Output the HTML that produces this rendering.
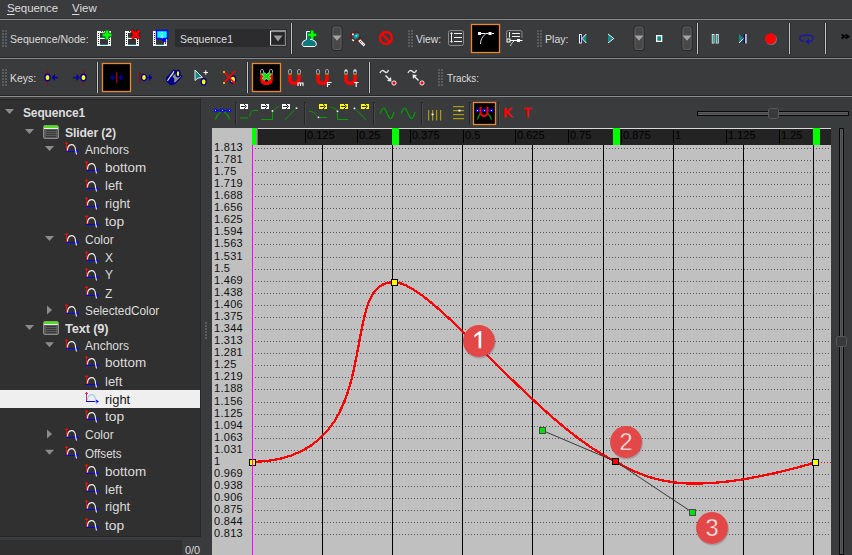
<!DOCTYPE html><html><head><meta charset="utf-8"><style>
*{margin:0;padding:0;box-sizing:border-box}
body{width:852px;height:555px;overflow:hidden;background:#3a3b3d;position:relative;font-family:"Liberation Sans",sans-serif;color:#dcdcdc;font-size:12px}
.a{position:absolute}
.t{position:absolute;white-space:nowrap;line-height:1;text-underline-offset:2px}
svg{position:absolute;left:0;top:0}
</style></head><body>

<div class="a" style="left:0px;top:18px;width:852px;height:1px;background:#333436"></div>
<div class="a" style="left:0px;top:19px;width:852px;height:1px;background:#8a8a8a"></div>
<div class="a" style="left:0px;top:20px;width:852px;height:1px;background:#353638"></div>
<div class="a" style="left:0px;top:57px;width:852px;height:1px;background:#262626"></div>
<div class="a" style="left:0px;top:58px;width:852px;height:1px;background:#8a8a8a"></div>
<div class="a" style="left:0px;top:59px;width:852px;height:1px;background:#353638"></div>
<div class="a" style="left:0px;top:95px;width:852px;height:1px;background:#262626"></div>
<div class="a" style="left:0px;top:96px;width:852px;height:1px;background:#8e8e8e"></div>
<div class="a" style="left:0px;top:97px;width:852px;height:1px;background:#38393b"></div>
<div class="t" style="left:7px;top:2.57px;font-size:11.5px;color:#dcdcdc;font-weight:normal;letter-spacing:-0.1px;"><u>S</u>equence</div>
<div class="t" style="left:72px;top:2.57px;font-size:11.5px;color:#dcdcdc;font-weight:normal;letter-spacing:0px;"><u>V</u>iew</div>
<div class="t" style="left:10px;top:34.27px;font-size:11.5px;color:#dcdcdc;font-weight:normal;letter-spacing:0px;transform:scaleX(0.917);transform-origin:0 0;">Sequence/Node:</div>
<div class="t" style="left:416px;top:34.27px;font-size:11.5px;color:#dcdcdc;font-weight:normal;letter-spacing:0px;transform:scaleX(0.896);transform-origin:0 0;">View:</div>
<div class="t" style="left:544.5px;top:34.27px;font-size:11.5px;color:#dcdcdc;font-weight:normal;letter-spacing:0px;transform:scaleX(0.918);transform-origin:0 0;">Play:</div>
<div class="t" style="left:9.9px;top:73.27px;font-size:11.5px;color:#dcdcdc;font-weight:normal;letter-spacing:0px;transform:scaleX(0.908);transform-origin:0 0;">Keys:</div>
<div class="t" style="left:446.5px;top:73.27px;font-size:11.5px;color:#dcdcdc;font-weight:normal;letter-spacing:0px;transform:scaleX(0.858);transform-origin:0 0;">Tracks:</div>
<div class="a" style="left:175px;top:29px;width:112px;height:18px;background:#2c2c2e"></div>
<div class="t" style="left:179.5px;top:34.27px;font-size:11.5px;color:#dcdcdc;font-weight:normal;letter-spacing:0px;transform:scaleX(0.91);transform-origin:0 0;">Sequence1</div>
<div class="a" style="left:0px;top:99px;width:201px;height:438px;background:#262626"></div>
<div class="a" style="left:0px;top:100px;width:200px;height:436px;background:#303030"></div>
<div class="a" style="left:0px;top:537px;width:212px;height:18px;background:#3a3b3d"></div>
<div class="a" style="left:0px;top:540px;width:182px;height:15px;background:#303031"></div>
<div class="t" style="left:185px;top:545.27px;font-size:11.5px;color:#dcdcdc;font-weight:normal;letter-spacing:0px;transform:scaleX(0.95);transform-origin:0 0;">0/0</div>
<div class="t" style="left:23px;top:106.64px;font-size:12px;color:#dcdcdc;font-weight:bold;letter-spacing:-0.15px;">Sequence1</div>
<div class="t" style="left:65px;top:126.64px;font-size:12px;color:#dcdcdc;font-weight:bold;letter-spacing:-0.15px;transform:scaleX(1.02);transform-origin:0 0;">Slider (2)</div>
<div class="t" style="left:85px;top:143.64px;font-size:12px;color:#dcdcdc;font-weight:normal;letter-spacing:0px;">Anchors</div>
<div class="t" style="left:105px;top:161.74px;font-size:12px;color:#dcdcdc;font-weight:normal;letter-spacing:0px;transform:scaleX(1.12);transform-origin:0 0;">bottom</div>
<div class="t" style="left:105px;top:179.74px;font-size:12px;color:#dcdcdc;font-weight:normal;letter-spacing:0px;transform:scaleX(1.08);transform-origin:0 0;">left</div>
<div class="t" style="left:105px;top:197.94px;font-size:12px;color:#dcdcdc;font-weight:normal;letter-spacing:0px;transform:scaleX(1.08);transform-origin:0 0;">right</div>
<div class="t" style="left:105px;top:215.74px;font-size:12px;color:#dcdcdc;font-weight:normal;letter-spacing:0px;transform:scaleX(1.15);transform-origin:0 0;">top</div>
<div class="t" style="left:85px;top:233.74px;font-size:12px;color:#dcdcdc;font-weight:normal;letter-spacing:0px;">Color</div>
<div class="t" style="left:105px;top:251.74px;font-size:12px;color:#dcdcdc;font-weight:normal;letter-spacing:0px;">X</div>
<div class="t" style="left:105px;top:269.44px;font-size:12px;color:#dcdcdc;font-weight:normal;letter-spacing:0px;">Y</div>
<div class="t" style="left:105px;top:287.64px;font-size:12px;color:#dcdcdc;font-weight:normal;letter-spacing:0px;">Z</div>
<div class="t" style="left:85px;top:305.14px;font-size:12px;color:#dcdcdc;font-weight:normal;letter-spacing:0px;transform:scaleX(0.985);transform-origin:0 0;">SelectedColor</div>
<div class="t" style="left:65px;top:322.64px;font-size:12px;color:#dcdcdc;font-weight:bold;letter-spacing:-0.15px;transform:scaleX(1.07);transform-origin:0 0;">Text (9)</div>
<div class="t" style="left:85px;top:339.94px;font-size:12px;color:#dcdcdc;font-weight:normal;letter-spacing:0px;">Anchors</div>
<div class="t" style="left:105px;top:357.14px;font-size:12px;color:#dcdcdc;font-weight:normal;letter-spacing:0px;transform:scaleX(1.12);transform-origin:0 0;">bottom</div>
<div class="t" style="left:105px;top:375.74px;font-size:12px;color:#dcdcdc;font-weight:normal;letter-spacing:0px;transform:scaleX(1.08);transform-origin:0 0;">left</div>
<div class="a" style="left:0px;top:390px;width:200px;height:18px;background:#efefef"></div>
<div class="t" style="left:105px;top:393.64px;font-size:12px;color:#141414;font-weight:normal;letter-spacing:0px;transform:scaleX(1.08);transform-origin:0 0;">right</div>
<div class="t" style="left:105px;top:411.04px;font-size:12px;color:#dcdcdc;font-weight:normal;letter-spacing:0px;transform:scaleX(1.15);transform-origin:0 0;">top</div>
<div class="t" style="left:85px;top:429.24px;font-size:12px;color:#dcdcdc;font-weight:normal;letter-spacing:0px;">Color</div>
<div class="t" style="left:85px;top:447.54px;font-size:12px;color:#dcdcdc;font-weight:normal;letter-spacing:0px;transform:scaleX(0.97);transform-origin:0 0;">Offsets</div>
<div class="t" style="left:105px;top:465.54px;font-size:12px;color:#dcdcdc;font-weight:normal;letter-spacing:0px;transform:scaleX(1.12);transform-origin:0 0;">bottom</div>
<div class="t" style="left:105px;top:483.64px;font-size:12px;color:#dcdcdc;font-weight:normal;letter-spacing:0px;transform:scaleX(1.08);transform-origin:0 0;">left</div>
<div class="t" style="left:105px;top:501.24px;font-size:12px;color:#dcdcdc;font-weight:normal;letter-spacing:0px;transform:scaleX(1.08);transform-origin:0 0;">right</div>
<div class="t" style="left:105px;top:519.64px;font-size:12px;color:#dcdcdc;font-weight:normal;letter-spacing:0px;transform:scaleX(1.15);transform-origin:0 0;">top</div>
<svg width="852" height="555"><path d="M5 108.89999999999999H14L9.5 113.89999999999999Z" fill="#8c8c8c"/><path d="M25 128.9H34L29.5 133.9Z" fill="#8c8c8c"/><rect x="43.5" y="125.5" width="15" height="13" rx="1.5" fill="#5a5a5a" stroke="#8a8a8a" stroke-width="1"/><path d="M44 128.5V126.5Q44 125.5 45 125.5H57L58 126.5V128.5Z" fill="#55dd22"/><rect x="44" y="128" width="14" height="1" fill="#e8f0e8"/><rect x="46" y="130" width="10" height="1" fill="#3a3a3a"/><rect x="46" y="132" width="10" height="1" fill="#3a3a3a"/><rect x="46" y="134" width="10" height="1" fill="#3a3a3a"/><rect x="46" y="136" width="10" height="1" fill="#3a3a3a"/><path d="M45 145.9H54L49.5 150.9Z" fill="#8c8c8c"/><rect x="66" y="142" width="1" height="9" fill="#ff0000"/><rect x="65" y="143" width="3" height="1" fill="#ff0000"/><rect x="66" y="151" width="11" height="1" fill="#0000ff"/><path d="M76 149.5L79 151.5L76 153.5Z" fill="#0000ff"/><path d="M67.5 150.5C67.5 143 75.5 142.5 75.5 150L76.5 154.5" stroke="#f4f4f4" stroke-width="1.1" fill="none"/><rect x="86" y="161" width="1" height="9" fill="#ff0000"/><rect x="85" y="162" width="3" height="1" fill="#ff0000"/><rect x="86" y="170" width="11" height="1" fill="#0000ff"/><path d="M96 168.5L99 170.5L96 172.5Z" fill="#0000ff"/><path d="M87.5 169.5C87.5 162 95.5 161.5 95.5 169L96.5 173.5" stroke="#f4f4f4" stroke-width="1.1" fill="none"/><rect x="86" y="179" width="1" height="9" fill="#ff0000"/><rect x="85" y="180" width="3" height="1" fill="#ff0000"/><rect x="86" y="188" width="11" height="1" fill="#0000ff"/><path d="M96 186.5L99 188.5L96 190.5Z" fill="#0000ff"/><path d="M87.5 187.5C87.5 180 95.5 179.5 95.5 187L96.5 191.5" stroke="#f4f4f4" stroke-width="1.1" fill="none"/><rect x="86" y="197" width="1" height="9" fill="#ff0000"/><rect x="85" y="198" width="3" height="1" fill="#ff0000"/><rect x="86" y="206" width="11" height="1" fill="#0000ff"/><path d="M96 204.5L99 206.5L96 208.5Z" fill="#0000ff"/><path d="M87.5 205.5C87.5 198 95.5 197.5 95.5 205L96.5 209.5" stroke="#f4f4f4" stroke-width="1.1" fill="none"/><rect x="86" y="215" width="1" height="9" fill="#ff0000"/><rect x="85" y="216" width="3" height="1" fill="#ff0000"/><rect x="86" y="224" width="11" height="1" fill="#0000ff"/><path d="M96 222.5L99 224.5L96 226.5Z" fill="#0000ff"/><path d="M87.5 223.5C87.5 216 95.5 215.5 95.5 223L96.5 227.5" stroke="#f4f4f4" stroke-width="1.1" fill="none"/><path d="M45 236.0H54L49.5 241.0Z" fill="#8c8c8c"/><rect x="66" y="233" width="1" height="9" fill="#ff0000"/><rect x="65" y="234" width="3" height="1" fill="#ff0000"/><rect x="66" y="242" width="11" height="1" fill="#0000ff"/><path d="M76 240.5L79 242.5L76 244.5Z" fill="#0000ff"/><path d="M67.5 241.5C67.5 234 75.5 233.5 75.5 241L76.5 245.5" stroke="#f4f4f4" stroke-width="1.1" fill="none"/><rect x="86" y="251" width="1" height="9" fill="#ff0000"/><rect x="85" y="252" width="3" height="1" fill="#ff0000"/><rect x="86" y="260" width="11" height="1" fill="#0000ff"/><path d="M96 258.5L99 260.5L96 262.5Z" fill="#0000ff"/><path d="M87.5 259.5C87.5 252 95.5 251.5 95.5 259L96.5 263.5" stroke="#f4f4f4" stroke-width="1.1" fill="none"/><rect x="86" y="268" width="1" height="9" fill="#ff0000"/><rect x="85" y="269" width="3" height="1" fill="#ff0000"/><rect x="86" y="277" width="11" height="1" fill="#0000ff"/><path d="M96 275.5L99 277.5L96 279.5Z" fill="#0000ff"/><path d="M87.5 276.5C87.5 269 95.5 268.5 95.5 276L96.5 280.5" stroke="#f4f4f4" stroke-width="1.1" fill="none"/><rect x="86" y="286" width="1" height="9" fill="#ff0000"/><rect x="85" y="287" width="3" height="1" fill="#ff0000"/><rect x="86" y="295" width="11" height="1" fill="#0000ff"/><path d="M96 293.5L99 295.5L96 297.5Z" fill="#0000ff"/><path d="M87.5 294.5C87.5 287 95.5 286.5 95.5 294L96.5 298.5" stroke="#f4f4f4" stroke-width="1.1" fill="none"/><path d="M47 305.40000000000003V314.40000000000003L52 309.90000000000003Z" fill="#8c8c8c"/><rect x="66" y="304" width="1" height="9" fill="#ff0000"/><rect x="65" y="305" width="3" height="1" fill="#ff0000"/><rect x="66" y="313" width="11" height="1" fill="#0000ff"/><path d="M76 311.5L79 313.5L76 315.5Z" fill="#0000ff"/><path d="M67.5 312.5C67.5 305 75.5 304.5 75.5 312L76.5 316.5" stroke="#f4f4f4" stroke-width="1.1" fill="none"/><path d="M25 324.90000000000003H34L29.5 329.90000000000003Z" fill="#8c8c8c"/><rect x="43.5" y="321.5" width="15" height="13" rx="1.5" fill="#5a5a5a" stroke="#8a8a8a" stroke-width="1"/><path d="M44 324.5V322.5Q44 321.5 45 321.5H57L58 322.5V324.5Z" fill="#55dd22"/><rect x="44" y="324" width="14" height="1" fill="#e8f0e8"/><rect x="46" y="326" width="10" height="1" fill="#3a3a3a"/><rect x="46" y="328" width="10" height="1" fill="#3a3a3a"/><rect x="46" y="330" width="10" height="1" fill="#3a3a3a"/><rect x="46" y="332" width="10" height="1" fill="#3a3a3a"/><path d="M45 342.20000000000005H54L49.5 347.20000000000005Z" fill="#8c8c8c"/><rect x="66" y="339" width="1" height="9" fill="#ff0000"/><rect x="65" y="340" width="3" height="1" fill="#ff0000"/><rect x="66" y="348" width="11" height="1" fill="#0000ff"/><path d="M76 346.5L79 348.5L76 350.5Z" fill="#0000ff"/><path d="M67.5 347.5C67.5 340 75.5 339.5 75.5 347L76.5 351.5" stroke="#f4f4f4" stroke-width="1.1" fill="none"/><rect x="86" y="356" width="1" height="9" fill="#ff0000"/><rect x="85" y="357" width="3" height="1" fill="#ff0000"/><rect x="86" y="365" width="11" height="1" fill="#0000ff"/><path d="M96 363.5L99 365.5L96 367.5Z" fill="#0000ff"/><path d="M87.5 364.5C87.5 357 95.5 356.5 95.5 364L96.5 368.5" stroke="#f4f4f4" stroke-width="1.1" fill="none"/><rect x="86" y="375" width="1" height="9" fill="#ff0000"/><rect x="85" y="376" width="3" height="1" fill="#ff0000"/><rect x="86" y="384" width="11" height="1" fill="#0000ff"/><path d="M96 382.5L99 384.5L96 386.5Z" fill="#0000ff"/><path d="M87.5 383.5C87.5 376 95.5 375.5 95.5 383L96.5 387.5" stroke="#f4f4f4" stroke-width="1.1" fill="none"/><rect x="86" y="392" width="1" height="9" fill="#c03070"/><rect x="85" y="393" width="3" height="1" fill="#c03070"/><rect x="86" y="401" width="11" height="1" fill="#0000ff"/><path d="M96 399.5L99 401.5L96 403.5Z" fill="#0000ff"/><path d="M87.5 400.5C87.5 393 95.5 392.5 95.5 400L96.5 404.5" stroke="#a8c8ea" stroke-width="1.1" fill="none"/><rect x="86" y="410" width="1" height="9" fill="#ff0000"/><rect x="85" y="411" width="3" height="1" fill="#ff0000"/><rect x="86" y="419" width="11" height="1" fill="#0000ff"/><path d="M96 417.5L99 419.5L96 421.5Z" fill="#0000ff"/><path d="M87.5 418.5C87.5 411 95.5 410.5 95.5 418L96.5 422.5" stroke="#f4f4f4" stroke-width="1.1" fill="none"/><path d="M47 429.5V438.5L52 434.0Z" fill="#8c8c8c"/><rect x="66" y="428" width="1" height="9" fill="#ff0000"/><rect x="65" y="429" width="3" height="1" fill="#ff0000"/><rect x="66" y="437" width="11" height="1" fill="#0000ff"/><path d="M76 435.5L79 437.5L76 439.5Z" fill="#0000ff"/><path d="M67.5 436.5C67.5 429 75.5 428.5 75.5 436L76.5 440.5" stroke="#f4f4f4" stroke-width="1.1" fill="none"/><path d="M45 449.8H54L49.5 454.8Z" fill="#8c8c8c"/><rect x="66" y="446" width="1" height="9" fill="#ff0000"/><rect x="65" y="447" width="3" height="1" fill="#ff0000"/><rect x="66" y="455" width="11" height="1" fill="#0000ff"/><path d="M76 453.5L79 455.5L76 457.5Z" fill="#0000ff"/><path d="M67.5 454.5C67.5 447 75.5 446.5 75.5 454L76.5 458.5" stroke="#f4f4f4" stroke-width="1.1" fill="none"/><rect x="86" y="464" width="1" height="9" fill="#ff0000"/><rect x="85" y="465" width="3" height="1" fill="#ff0000"/><rect x="86" y="473" width="11" height="1" fill="#0000ff"/><path d="M96 471.5L99 473.5L96 475.5Z" fill="#0000ff"/><path d="M87.5 472.5C87.5 465 95.5 464.5 95.5 472L96.5 476.5" stroke="#f4f4f4" stroke-width="1.1" fill="none"/><rect x="86" y="482" width="1" height="9" fill="#ff0000"/><rect x="85" y="483" width="3" height="1" fill="#ff0000"/><rect x="86" y="491" width="11" height="1" fill="#0000ff"/><path d="M96 489.5L99 491.5L96 493.5Z" fill="#0000ff"/><path d="M87.5 490.5C87.5 483 95.5 482.5 95.5 490L96.5 494.5" stroke="#f4f4f4" stroke-width="1.1" fill="none"/><rect x="86" y="500" width="1" height="9" fill="#ff0000"/><rect x="85" y="501" width="3" height="1" fill="#ff0000"/><rect x="86" y="509" width="11" height="1" fill="#0000ff"/><path d="M96 507.5L99 509.5L96 511.5Z" fill="#0000ff"/><path d="M87.5 508.5C87.5 501 95.5 500.5 95.5 508L96.5 512.5" stroke="#f4f4f4" stroke-width="1.1" fill="none"/><rect x="86" y="518" width="1" height="9" fill="#ff0000"/><rect x="85" y="519" width="3" height="1" fill="#ff0000"/><rect x="86" y="527" width="11" height="1" fill="#0000ff"/><path d="M96 525.5L99 527.5L96 529.5Z" fill="#0000ff"/><path d="M87.5 526.5C87.5 519 95.5 518.5 95.5 526L96.5 530.5" stroke="#f4f4f4" stroke-width="1.1" fill="none"/></svg>
<div class="a" style="left:201px;top:98px;width:11px;height:457px;background:#3a3b3d"></div>
<div class="a" style="left:212px;top:128px;width:619px;height:427px;background:#c0c0c0"></div>
<div class="a" style="left:831px;top:98px;width:21px;height:457px;background:#3a3b3d"></div>
<div class="a" style="left:257px;top:128px;width:574px;height:17px;background:#232323"></div>
<div class="a" style="left:258px;top:128px;width:573px;height:1px;background:#d8d8d8"></div>
<svg width="852" height="555"><line x1="255" y1="148.5" x2="831" y2="148.5" stroke="#5a5a5a" stroke-width="1" stroke-dasharray="1 2"/><line x1="255" y1="160.5" x2="831" y2="160.5" stroke="#5a5a5a" stroke-width="1" stroke-dasharray="1 2"/><line x1="255" y1="172.5" x2="831" y2="172.5" stroke="#5a5a5a" stroke-width="1" stroke-dasharray="1 2"/><line x1="255" y1="184.5" x2="831" y2="184.5" stroke="#5a5a5a" stroke-width="1" stroke-dasharray="1 2"/><line x1="255" y1="196.5" x2="831" y2="196.5" stroke="#5a5a5a" stroke-width="1" stroke-dasharray="1 2"/><line x1="255" y1="208.5" x2="831" y2="208.5" stroke="#5a5a5a" stroke-width="1" stroke-dasharray="1 2"/><line x1="255" y1="220.5" x2="831" y2="220.5" stroke="#5a5a5a" stroke-width="1" stroke-dasharray="1 2"/><line x1="255" y1="232.5" x2="831" y2="232.5" stroke="#5a5a5a" stroke-width="1" stroke-dasharray="1 2"/><line x1="255" y1="244.5" x2="831" y2="244.5" stroke="#5a5a5a" stroke-width="1" stroke-dasharray="1 2"/><line x1="255" y1="257.5" x2="831" y2="257.5" stroke="#5a5a5a" stroke-width="1" stroke-dasharray="1 2"/><line x1="255" y1="269.5" x2="831" y2="269.5" stroke="#5a5a5a" stroke-width="1" stroke-dasharray="1 2"/><line x1="255" y1="281.5" x2="831" y2="281.5" stroke="#5a5a5a" stroke-width="1" stroke-dasharray="1 2"/><line x1="255" y1="293.5" x2="831" y2="293.5" stroke="#5a5a5a" stroke-width="1" stroke-dasharray="1 2"/><line x1="255" y1="305.5" x2="831" y2="305.5" stroke="#5a5a5a" stroke-width="1" stroke-dasharray="1 2"/><line x1="255" y1="317.5" x2="831" y2="317.5" stroke="#5a5a5a" stroke-width="1" stroke-dasharray="1 2"/><line x1="255" y1="329.5" x2="831" y2="329.5" stroke="#5a5a5a" stroke-width="1" stroke-dasharray="1 2"/><line x1="255" y1="341.5" x2="831" y2="341.5" stroke="#5a5a5a" stroke-width="1" stroke-dasharray="1 2"/><line x1="255" y1="353.5" x2="831" y2="353.5" stroke="#5a5a5a" stroke-width="1" stroke-dasharray="1 2"/><line x1="255" y1="365.5" x2="831" y2="365.5" stroke="#5a5a5a" stroke-width="1" stroke-dasharray="1 2"/><line x1="255" y1="377.5" x2="831" y2="377.5" stroke="#5a5a5a" stroke-width="1" stroke-dasharray="1 2"/><line x1="255" y1="389.5" x2="831" y2="389.5" stroke="#5a5a5a" stroke-width="1" stroke-dasharray="1 2"/><line x1="255" y1="402.5" x2="831" y2="402.5" stroke="#5a5a5a" stroke-width="1" stroke-dasharray="1 2"/><line x1="255" y1="414.5" x2="831" y2="414.5" stroke="#5a5a5a" stroke-width="1" stroke-dasharray="1 2"/><line x1="255" y1="426.5" x2="831" y2="426.5" stroke="#5a5a5a" stroke-width="1" stroke-dasharray="1 2"/><line x1="255" y1="438.5" x2="831" y2="438.5" stroke="#5a5a5a" stroke-width="1" stroke-dasharray="1 2"/><line x1="255" y1="450.5" x2="831" y2="450.5" stroke="#5a5a5a" stroke-width="1" stroke-dasharray="1 2"/><line x1="255" y1="462.5" x2="831" y2="462.5" stroke="#5a5a5a" stroke-width="1" stroke-dasharray="1 2"/><line x1="255" y1="474.5" x2="831" y2="474.5" stroke="#5a5a5a" stroke-width="1" stroke-dasharray="1 2"/><line x1="255" y1="486.5" x2="831" y2="486.5" stroke="#5a5a5a" stroke-width="1" stroke-dasharray="1 2"/><line x1="255" y1="498.5" x2="831" y2="498.5" stroke="#5a5a5a" stroke-width="1" stroke-dasharray="1 2"/><line x1="255" y1="510.5" x2="831" y2="510.5" stroke="#5a5a5a" stroke-width="1" stroke-dasharray="1 2"/><line x1="255" y1="522.5" x2="831" y2="522.5" stroke="#5a5a5a" stroke-width="1" stroke-dasharray="1 2"/><line x1="255" y1="534.5" x2="831" y2="534.5" stroke="#5a5a5a" stroke-width="1" stroke-dasharray="1 2"/><rect x="322" y="145" width="1" height="410" fill="#000"/><rect x="392" y="145" width="1" height="410" fill="#000"/><rect x="462" y="145" width="1" height="410" fill="#000"/><rect x="532" y="145" width="1" height="410" fill="#000"/><rect x="603" y="145" width="1" height="410" fill="#000"/><rect x="673" y="145" width="1" height="410" fill="#000"/><rect x="743" y="145" width="1" height="410" fill="#000"/><rect x="813" y="145" width="1" height="410" fill="#000"/></svg>
<div class="t" style="left:214px;top:142.19px;font-size:11px;color:#101010;font-weight:normal;letter-spacing:0.3px;">1.813</div>
<div class="t" style="left:214px;top:154.19px;font-size:11px;color:#101010;font-weight:normal;letter-spacing:0.3px;">1.781</div>
<div class="t" style="left:214px;top:166.19px;font-size:11px;color:#101010;font-weight:normal;letter-spacing:0.3px;">1.75</div>
<div class="t" style="left:214px;top:178.19px;font-size:11px;color:#101010;font-weight:normal;letter-spacing:0.3px;">1.719</div>
<div class="t" style="left:214px;top:190.19px;font-size:11px;color:#101010;font-weight:normal;letter-spacing:0.3px;">1.688</div>
<div class="t" style="left:214px;top:202.19px;font-size:11px;color:#101010;font-weight:normal;letter-spacing:0.3px;">1.656</div>
<div class="t" style="left:214px;top:214.19px;font-size:11px;color:#101010;font-weight:normal;letter-spacing:0.3px;">1.625</div>
<div class="t" style="left:214px;top:226.19px;font-size:11px;color:#101010;font-weight:normal;letter-spacing:0.3px;">1.594</div>
<div class="t" style="left:214px;top:238.19px;font-size:11px;color:#101010;font-weight:normal;letter-spacing:0.3px;">1.563</div>
<div class="t" style="left:214px;top:251.19px;font-size:11px;color:#101010;font-weight:normal;letter-spacing:0.3px;">1.531</div>
<div class="t" style="left:214px;top:263.19px;font-size:11px;color:#101010;font-weight:normal;letter-spacing:0.3px;">1.5</div>
<div class="t" style="left:214px;top:275.19px;font-size:11px;color:#101010;font-weight:normal;letter-spacing:0.3px;">1.469</div>
<div class="t" style="left:214px;top:287.19px;font-size:11px;color:#101010;font-weight:normal;letter-spacing:0.3px;">1.438</div>
<div class="t" style="left:214px;top:299.19px;font-size:11px;color:#101010;font-weight:normal;letter-spacing:0.3px;">1.406</div>
<div class="t" style="left:214px;top:311.19px;font-size:11px;color:#101010;font-weight:normal;letter-spacing:0.3px;">1.375</div>
<div class="t" style="left:214px;top:323.19px;font-size:11px;color:#101010;font-weight:normal;letter-spacing:0.3px;">1.344</div>
<div class="t" style="left:214px;top:335.19px;font-size:11px;color:#101010;font-weight:normal;letter-spacing:0.3px;">1.313</div>
<div class="t" style="left:214px;top:347.19px;font-size:11px;color:#101010;font-weight:normal;letter-spacing:0.3px;">1.281</div>
<div class="t" style="left:214px;top:359.19px;font-size:11px;color:#101010;font-weight:normal;letter-spacing:0.3px;">1.25</div>
<div class="t" style="left:214px;top:371.19px;font-size:11px;color:#101010;font-weight:normal;letter-spacing:0.3px;">1.219</div>
<div class="t" style="left:214px;top:383.19px;font-size:11px;color:#101010;font-weight:normal;letter-spacing:0.3px;">1.188</div>
<div class="t" style="left:214px;top:396.19px;font-size:11px;color:#101010;font-weight:normal;letter-spacing:0.3px;">1.156</div>
<div class="t" style="left:214px;top:408.19px;font-size:11px;color:#101010;font-weight:normal;letter-spacing:0.3px;">1.125</div>
<div class="t" style="left:214px;top:420.19px;font-size:11px;color:#101010;font-weight:normal;letter-spacing:0.3px;">1.094</div>
<div class="t" style="left:214px;top:432.19px;font-size:11px;color:#101010;font-weight:normal;letter-spacing:0.3px;">1.063</div>
<div class="t" style="left:214px;top:444.19px;font-size:11px;color:#101010;font-weight:normal;letter-spacing:0.3px;">1.031</div>
<div class="t" style="left:214px;top:456.19px;font-size:11px;color:#101010;font-weight:normal;letter-spacing:0.3px;">1</div>
<div class="t" style="left:214px;top:468.19px;font-size:11px;color:#101010;font-weight:normal;letter-spacing:0.3px;">0.969</div>
<div class="t" style="left:214px;top:480.19px;font-size:11px;color:#101010;font-weight:normal;letter-spacing:0.3px;">0.938</div>
<div class="t" style="left:214px;top:492.19px;font-size:11px;color:#101010;font-weight:normal;letter-spacing:0.3px;">0.906</div>
<div class="t" style="left:214px;top:504.19px;font-size:11px;color:#101010;font-weight:normal;letter-spacing:0.3px;">0.875</div>
<div class="t" style="left:214px;top:516.19px;font-size:11px;color:#101010;font-weight:normal;letter-spacing:0.3px;">0.844</div>
<div class="t" style="left:214px;top:528.19px;font-size:11px;color:#101010;font-weight:normal;letter-spacing:0.3px;">0.813</div>
<div class="a" style="left:305px;top:130px;width:1px;height:13px;background:#000"></div>
<div class="t" style="left:307px;top:130.19px;font-size:11px;color:#000000;font-weight:normal;letter-spacing:0px;">0.125</div>
<div class="a" style="left:357px;top:130px;width:1px;height:13px;background:#000"></div>
<div class="t" style="left:359px;top:130.19px;font-size:11px;color:#000000;font-weight:normal;letter-spacing:0px;">0.25</div>
<div class="a" style="left:410px;top:130px;width:1px;height:13px;background:#000"></div>
<div class="t" style="left:412px;top:130.19px;font-size:11px;color:#000000;font-weight:normal;letter-spacing:0px;">0.375</div>
<div class="a" style="left:463px;top:130px;width:1px;height:13px;background:#000"></div>
<div class="t" style="left:465px;top:130.19px;font-size:11px;color:#000000;font-weight:normal;letter-spacing:0px;">0.5</div>
<div class="a" style="left:515px;top:130px;width:1px;height:13px;background:#000"></div>
<div class="t" style="left:517px;top:130.19px;font-size:11px;color:#000000;font-weight:normal;letter-spacing:0px;">0.625</div>
<div class="a" style="left:568px;top:130px;width:1px;height:13px;background:#000"></div>
<div class="t" style="left:570px;top:130.19px;font-size:11px;color:#000000;font-weight:normal;letter-spacing:0px;">0.75</div>
<div class="a" style="left:621px;top:130px;width:1px;height:13px;background:#000"></div>
<div class="t" style="left:623px;top:130.19px;font-size:11px;color:#000000;font-weight:normal;letter-spacing:0px;">0.875</div>
<div class="a" style="left:673px;top:130px;width:1px;height:13px;background:#000"></div>
<div class="t" style="left:675px;top:130.19px;font-size:11px;color:#000000;font-weight:normal;letter-spacing:0px;">1</div>
<div class="a" style="left:726px;top:130px;width:1px;height:13px;background:#000"></div>
<div class="t" style="left:728px;top:130.19px;font-size:11px;color:#000000;font-weight:normal;letter-spacing:0px;">1.125</div>
<div class="a" style="left:779px;top:130px;width:1px;height:13px;background:#000"></div>
<div class="t" style="left:781px;top:130.19px;font-size:11px;color:#000000;font-weight:normal;letter-spacing:0px;">1.25</div>
<div class="a" style="left:252px;top:128px;width:5px;height:17px;background:#00ff00"></div>
<div class="a" style="left:392px;top:128px;width:7px;height:17px;background:#00ff00"></div>
<div class="a" style="left:613px;top:128px;width:7px;height:17px;background:#00ff00"></div>
<div class="a" style="left:813px;top:128px;width:7px;height:17px;background:#00ff00"></div>
<div class="a" style="left:257px;top:128px;width:1px;height:17px;background:#ff00ff"></div>
<div class="a" style="left:252px;top:145px;width:1px;height:410px;background:#ff00ff"></div>
<svg width="852" height="555"><path d="M252.5 462 C394.8 459.3 333 279.2 394.5 282.3 C433.2 282.5 538.1 425.9 615.5 461.3 C652.7 483.8 695.8 497.1 815.5 462.5" fill="none" stroke="#ff0000" stroke-width="2.3" shape-rendering="crispEdges"/><rect x="819" y="462" width="12" height="1" fill="#c0c0c0"/><rect x="821" y="462" width="1" height="1" fill="#ff0000"/><rect x="824" y="462" width="1" height="1" fill="#ff0000"/><rect x="827" y="462" width="1" height="1" fill="#ff0000"/><rect x="830" y="462" width="1" height="1" fill="#ff0000"/><line x1="542.5" y1="430.5" x2="615.5" y2="461.5" stroke="#3a3a3a" stroke-width="1"/><line x1="615.5" y1="461.5" x2="692.5" y2="512.5" stroke="#3a3a3a" stroke-width="1"/><rect x="249.5" y="459.5" width="6" height="6" fill="#ffff00" stroke="#000" stroke-width="1"/><rect x="391.5" y="279.5" width="6" height="6" fill="#ffff00" stroke="#000" stroke-width="1"/><rect x="612.5" y="458.5" width="6" height="6" fill="#ff0000" stroke="#000" stroke-width="1"/><rect x="812.5" y="459.5" width="6" height="6" fill="#ffff00" stroke="#000" stroke-width="1"/><rect x="539.5" y="427.5" width="6" height="6" fill="#00e000" stroke="#4a4a4a" stroke-width="1"/><rect x="689.5" y="509.5" width="6" height="6" fill="#00e000" stroke="#4a4a4a" stroke-width="1"/><circle cx="479.59999999999997" cy="342.2" r="16.2" fill="rgba(0,0,0,0.16)"/><circle cx="478.9" cy="341" r="15.9" fill="#e34848"/><path d="M478.6 348.2V334.6L474.3 337.6V335.1L479.6 330.9H481.2V348.2Z" fill="#fff"/><circle cx="626.7" cy="443.2" r="16.2" fill="rgba(0,0,0,0.16)"/><circle cx="626" cy="442" r="15.9" fill="#e34848"/><text x="626" y="450.2" text-anchor="middle" font-family="Liberation Sans" font-size="23.5" fill="#fff" stroke="#e34848" stroke-width="0.5">2</text><circle cx="712.7" cy="529.2" r="16.2" fill="rgba(0,0,0,0.16)"/><circle cx="712" cy="528" r="15.9" fill="#e34848"/><text x="712" y="536.2" text-anchor="middle" font-family="Liberation Sans" font-size="23.5" fill="#fff" stroke="#e34848" stroke-width="0.5">3</text><rect x="252" y="455" width="1" height="15" fill="#ff00ff"/></svg>
<svg width="852" height="555"><rect x="2" y="30" width="2" height="2" fill="#5c5c5c"/><rect x="5" y="30" width="2" height="2" fill="#5c5c5c"/><rect x="2" y="33" width="2" height="2" fill="#5c5c5c"/><rect x="5" y="33" width="2" height="2" fill="#5c5c5c"/><rect x="2" y="36" width="2" height="2" fill="#5c5c5c"/><rect x="5" y="36" width="2" height="2" fill="#5c5c5c"/><rect x="2" y="39" width="2" height="2" fill="#5c5c5c"/><rect x="5" y="39" width="2" height="2" fill="#5c5c5c"/><rect x="2" y="42" width="2" height="2" fill="#5c5c5c"/><rect x="5" y="42" width="2" height="2" fill="#5c5c5c"/><rect x="2" y="45" width="2" height="2" fill="#5c5c5c"/><rect x="5" y="45" width="2" height="2" fill="#5c5c5c"/><rect x="2" y="69" width="2" height="2" fill="#5c5c5c"/><rect x="5" y="69" width="2" height="2" fill="#5c5c5c"/><rect x="2" y="72" width="2" height="2" fill="#5c5c5c"/><rect x="5" y="72" width="2" height="2" fill="#5c5c5c"/><rect x="2" y="75" width="2" height="2" fill="#5c5c5c"/><rect x="5" y="75" width="2" height="2" fill="#5c5c5c"/><rect x="2" y="78" width="2" height="2" fill="#5c5c5c"/><rect x="5" y="78" width="2" height="2" fill="#5c5c5c"/><rect x="2" y="81" width="2" height="2" fill="#5c5c5c"/><rect x="5" y="81" width="2" height="2" fill="#5c5c5c"/><rect x="2" y="84" width="2" height="2" fill="#5c5c5c"/><rect x="5" y="84" width="2" height="2" fill="#5c5c5c"/><rect x="408" y="30" width="2" height="2" fill="#5c5c5c"/><rect x="411" y="30" width="2" height="2" fill="#5c5c5c"/><rect x="408" y="33" width="2" height="2" fill="#5c5c5c"/><rect x="411" y="33" width="2" height="2" fill="#5c5c5c"/><rect x="408" y="36" width="2" height="2" fill="#5c5c5c"/><rect x="411" y="36" width="2" height="2" fill="#5c5c5c"/><rect x="408" y="39" width="2" height="2" fill="#5c5c5c"/><rect x="411" y="39" width="2" height="2" fill="#5c5c5c"/><rect x="408" y="42" width="2" height="2" fill="#5c5c5c"/><rect x="411" y="42" width="2" height="2" fill="#5c5c5c"/><rect x="408" y="45" width="2" height="2" fill="#5c5c5c"/><rect x="411" y="45" width="2" height="2" fill="#5c5c5c"/><rect x="537" y="30" width="2" height="2" fill="#5c5c5c"/><rect x="540" y="30" width="2" height="2" fill="#5c5c5c"/><rect x="537" y="33" width="2" height="2" fill="#5c5c5c"/><rect x="540" y="33" width="2" height="2" fill="#5c5c5c"/><rect x="537" y="36" width="2" height="2" fill="#5c5c5c"/><rect x="540" y="36" width="2" height="2" fill="#5c5c5c"/><rect x="537" y="39" width="2" height="2" fill="#5c5c5c"/><rect x="540" y="39" width="2" height="2" fill="#5c5c5c"/><rect x="537" y="42" width="2" height="2" fill="#5c5c5c"/><rect x="540" y="42" width="2" height="2" fill="#5c5c5c"/><rect x="537" y="45" width="2" height="2" fill="#5c5c5c"/><rect x="540" y="45" width="2" height="2" fill="#5c5c5c"/><rect x="438" y="69" width="2" height="2" fill="#5c5c5c"/><rect x="441" y="69" width="2" height="2" fill="#5c5c5c"/><rect x="438" y="72" width="2" height="2" fill="#5c5c5c"/><rect x="441" y="72" width="2" height="2" fill="#5c5c5c"/><rect x="438" y="75" width="2" height="2" fill="#5c5c5c"/><rect x="441" y="75" width="2" height="2" fill="#5c5c5c"/><rect x="438" y="78" width="2" height="2" fill="#5c5c5c"/><rect x="441" y="78" width="2" height="2" fill="#5c5c5c"/><rect x="438" y="81" width="2" height="2" fill="#5c5c5c"/><rect x="441" y="81" width="2" height="2" fill="#5c5c5c"/><rect x="438" y="84" width="2" height="2" fill="#5c5c5c"/><rect x="441" y="84" width="2" height="2" fill="#5c5c5c"/><rect x="97" y="31" width="14" height="15" fill="#f4f4f4"/><rect x="100" y="33" width="8" height="5" fill="#343434"/><rect x="100" y="39" width="8" height="6" fill="#343434"/><rect x="100" y="37" width="8" height="1" fill="#128080"/><rect x="100" y="44" width="8" height="1" fill="#128080"/><rect x="98" y="33" width="1" height="1" fill="#333"/><rect x="109" y="33" width="1" height="1" fill="#333"/><rect x="98" y="35" width="1" height="1" fill="#333"/><rect x="109" y="35" width="1" height="1" fill="#333"/><rect x="98" y="37" width="1" height="1" fill="#333"/><rect x="109" y="37" width="1" height="1" fill="#333"/><rect x="98" y="39" width="1" height="1" fill="#333"/><rect x="109" y="39" width="1" height="1" fill="#333"/><rect x="98" y="41" width="1" height="1" fill="#333"/><rect x="109" y="41" width="1" height="1" fill="#333"/><rect x="98" y="43" width="1" height="1" fill="#333"/><rect x="109" y="43" width="1" height="1" fill="#333"/><rect x="101" y="31" width="1" height="1" fill="#3a3a3a"/><rect x="103" y="31" width="1" height="1" fill="#3a3a3a"/><rect x="105" y="31" width="1" height="1" fill="#3a3a3a"/><path d="M102.5 35H111.5M107 30.5V39.5" stroke="#1a3a1a" stroke-width="4.4" fill="none"/><path d="M102.5 35H111.5M107 30.5V39.5" stroke="#00ff00" stroke-width="3" fill="none"/><rect x="125" y="31" width="14" height="15" fill="#f4f4f4"/><rect x="128" y="33" width="8" height="5" fill="#343434"/><rect x="128" y="39" width="8" height="6" fill="#343434"/><rect x="128" y="37" width="8" height="1" fill="#128080"/><rect x="128" y="44" width="8" height="1" fill="#128080"/><rect x="126" y="33" width="1" height="1" fill="#333"/><rect x="137" y="33" width="1" height="1" fill="#333"/><rect x="126" y="35" width="1" height="1" fill="#333"/><rect x="137" y="35" width="1" height="1" fill="#333"/><rect x="126" y="37" width="1" height="1" fill="#333"/><rect x="137" y="37" width="1" height="1" fill="#333"/><rect x="126" y="39" width="1" height="1" fill="#333"/><rect x="137" y="39" width="1" height="1" fill="#333"/><rect x="126" y="41" width="1" height="1" fill="#333"/><rect x="137" y="41" width="1" height="1" fill="#333"/><rect x="126" y="43" width="1" height="1" fill="#333"/><rect x="137" y="43" width="1" height="1" fill="#333"/><rect x="129" y="31" width="1" height="1" fill="#3a3a3a"/><rect x="131" y="31" width="1" height="1" fill="#3a3a3a"/><rect x="133" y="31" width="1" height="1" fill="#3a3a3a"/><path d="M131.7 30.7L139.3 38.3M139.3 30.7L131.7 38.3" stroke="#400" stroke-width="4.2" fill="none"/><path d="M131.7 30.7L139.3 38.3M139.3 30.7L131.7 38.3" stroke="#ff0000" stroke-width="3" fill="none"/><rect x="153" y="31" width="14" height="15" fill="#f4f4f4"/><rect x="156" y="33" width="8" height="5" fill="#343434"/><rect x="156" y="39" width="8" height="6" fill="#343434"/><rect x="156" y="37" width="8" height="1" fill="#128080"/><rect x="156" y="44" width="8" height="1" fill="#128080"/><rect x="154" y="33" width="1" height="1" fill="#333"/><rect x="165" y="33" width="1" height="1" fill="#333"/><rect x="154" y="35" width="1" height="1" fill="#333"/><rect x="165" y="35" width="1" height="1" fill="#333"/><rect x="154" y="37" width="1" height="1" fill="#333"/><rect x="165" y="37" width="1" height="1" fill="#333"/><rect x="154" y="39" width="1" height="1" fill="#333"/><rect x="165" y="39" width="1" height="1" fill="#333"/><rect x="154" y="41" width="1" height="1" fill="#333"/><rect x="165" y="41" width="1" height="1" fill="#333"/><rect x="154" y="43" width="1" height="1" fill="#333"/><rect x="165" y="43" width="1" height="1" fill="#333"/><rect x="157" y="31" width="1" height="1" fill="#3a3a3a"/><rect x="159" y="31" width="1" height="1" fill="#3a3a3a"/><rect x="161" y="31" width="1" height="1" fill="#3a3a3a"/><path d="M156.5 30.5H167.5V38.5H163.5L166 42L160.5 38.5H156.5Z" fill="#00ffff" stroke="#0000ff" stroke-width="1.5"/><rect x="161" y="32" width="2" height="1" fill="#f8c8c8"/><path d="M161.5 34V36.5L159.5 37.5H164.5L162.5 36.5V34Z" fill="#f8c8c8"/><rect x="270" y="30.5" width="16" height="15.5" fill="#3a3a3a"/><path d="M270.5 46.0V31.0H286" stroke="#e8e8e8" stroke-width="1" fill="none"/><path d="M285.5 30.5V45.5H270" stroke="#8a8a8a" stroke-width="1" fill="none"/><rect x="272" y="32.5" width="12" height="11.5" fill="#262626"/><path d="M273.5 35.5H282.5L278.0 41.5Z" fill="#9a9a9a"/><rect x="290" y="23" width="1" height="31" fill="#2c2c2c"/><rect x="291" y="23" width="1" height="31" fill="#c4c4c4"/><rect x="292" y="23" width="1" height="31" fill="#2c2c2c"/><path d="M306.5 31.5H310.5V39.5H312L315.5 41.5L316.5 44.5L315 46.5H303.5L302 44.5L303 41.5L306.5 39.5Z" fill="#0e7a80" stroke="#fff" stroke-width="1"/><path d="M308.0 34.8H316.4M312.2 30.599999999999998V39.0" stroke="#1a3a1a" stroke-width="4.199999999999999" fill="none"/><path d="M308.0 34.8H316.4M312.2 30.599999999999998V39.0" stroke="#00ff00" stroke-width="2.8" fill="none"/><rect x="332.0" y="26.0" width="10" height="24.5" rx="2.5" fill="#484848" stroke="#262626" stroke-width="1"/><rect x="333.0" y="27.0" width="8" height="22.5" rx="1.8" fill="none" stroke="#5e5e5e" stroke-width="1"/><path d="M332.5 35.5H341.5L337.0 40.8Z" fill="#a4a4a4"/><line x1="359" y1="40" x2="364.5" y2="45.5" stroke="#fff" stroke-width="2.5"/><line x1="360" y1="41" x2="364" y2="45" stroke="#a00" stroke-width="1" stroke-dasharray="1 1"/><circle cx="355.5" cy="36.5" r="4.6" fill="#3c3c3c" stroke="#8a0000" stroke-width="1.3" stroke-dasharray="1.5 0.8"/><ellipse cx="356.5" cy="36" rx="3.2" ry="2" transform="rotate(-45 356.5 36)" fill="#10a0a8"/><rect x="355.5" y="35" width="1.5" height="1.5" fill="#30ffff"/><rect x="352" y="33.5" width="1.8" height="1.8" fill="#fff"/><path d="M352 39.5L354 41" stroke="#fff" stroke-width="1.3"/><circle cx="386" cy="38" r="6" fill="none" stroke="#ff0000" stroke-width="2.3"/><line x1="382" y1="34" x2="390" y2="42" stroke="#ff0000" stroke-width="2.3"/><rect x="448.5" y="30.5" width="15" height="15" rx="2" fill="none" stroke="#8a8a8a" stroke-width="1"/><path d="M454 33.5H462M454 37.5H462M454 41.5H462" stroke="#f0f0f0" stroke-width="1.2"/><path d="M451.5 33V42" stroke="#f0f0f0" stroke-width="1"/><path d="M450 34L451.5 32L453 34ZM450 41L451.5 43L453 41Z" fill="#f0f0f0"/><rect x="471.5" y="24.5" width="28" height="28" fill="#000" stroke="#e8892c" stroke-width="1.3"/><rect x="478" y="32" width="3" height="3" fill="#fff"/><rect x="488.5" y="32" width="3" height="3" fill="#fff"/><path d="M481 33.5H488.5M491.5 33.5H494" stroke="#fff" stroke-width="1"/><path d="M485.5 34C482 37 480.5 40 480.5 44" stroke="#e0e0e0" stroke-width="1" fill="none"/><rect x="485" y="33.5" width="1" height="1" fill="#3040ff"/><path d="M506.5 38V32.5Q506.5 30.5 508.5 30.5H520Q522 30.5 522 32.5V38" fill="none" stroke="#8a8a8a" stroke-width="1"/><path d="M512 33.5H520M512 36.5H520" stroke="#f0f0f0" stroke-width="1.2"/><path d="M509.5 32V37.5" stroke="#f0f0f0" stroke-width="1"/><rect x="507" y="39" width="3" height="3" fill="none" stroke="#fff" stroke-width="1"/><rect x="517" y="39" width="3" height="3" fill="#fff"/><path d="M510 40.5H517M520 40.5H522.5" stroke="#fff" stroke-width="1"/><path d="M514 41C512 43 511 44 510.5 46" stroke="#e0e0e0" stroke-width="1" fill="none"/><rect x="579" y="34" width="2.8" height="9.5" fill="#f4f4f4"/><rect x="580" y="35" width="1.1" height="7.5" fill="#0a0a8a"/><path d="M582 38.5L586.3 34V43Z" fill="#0e8a8a"/><path d="M586.3 34L582 38.5L586.3 43" stroke="#f4f4f4" stroke-width="1" fill="none"/><path d="M608 34L613.8 38.5L608 43Z" fill="#0e8a8a"/><path d="M608 34L613.8 38.5L608 43" stroke="#f4f4f4" stroke-width="1" fill="none"/><rect x="634.0" y="26.0" width="10" height="24.5" rx="2.5" fill="#484848" stroke="#262626" stroke-width="1"/><rect x="635.0" y="27.0" width="8" height="22.5" rx="1.8" fill="none" stroke="#5e5e5e" stroke-width="1"/><path d="M634.5 35.5H643.5L639.0 40.8Z" fill="#a4a4a4"/><rect x="656" y="35" width="6.3" height="7" fill="#fff"/><rect x="657.3" y="36.3" width="3.7" height="4.5" fill="#0e8a8a"/><rect x="682.0" y="26.0" width="10" height="24.5" rx="2.5" fill="#484848" stroke="#262626" stroke-width="1"/><rect x="683.0" y="27.0" width="8" height="22.5" rx="1.8" fill="none" stroke="#5e5e5e" stroke-width="1"/><path d="M682.5 35.5H691.5L687.0 40.8Z" fill="#a4a4a4"/><rect x="696" y="23" width="1" height="31" fill="#2c2c2c"/><rect x="697" y="23" width="1" height="31" fill="#c4c4c4"/><rect x="698" y="23" width="1" height="31" fill="#2c2c2c"/><rect x="711.8" y="34" width="2.7" height="9.5" fill="#f4f4f4"/><rect x="712.6" y="34.8" width="1.2" height="8" fill="#0e8a8a"/><rect x="715.8" y="34" width="2.9" height="9.5" fill="#f4f4f4"/><rect x="716.6" y="34.8" width="1.3" height="8" fill="#0e8a8a"/><path d="M739 34L743.5 38.5L739 43Z" fill="#0e8a8a"/><path d="M743.5 38.5L739 43" stroke="#f4f4f4" stroke-width="1"/><rect x="743.8" y="34" width="1.5" height="9.5" fill="#0a0a8a"/><rect x="745.3" y="34" width="1.3" height="9.5" fill="#f4f4f4"/><circle cx="771.3" cy="39.5" r="5.6" fill="#777"/><circle cx="770.5" cy="38.7" r="5.5" fill="#ff0000"/><rect x="788" y="23" width="1" height="31" fill="#2c2c2c"/><rect x="789" y="23" width="1" height="31" fill="#c4c4c4"/><rect x="790" y="23" width="1" height="31" fill="#2c2c2c"/><path d="M803.5 41.5C798 40.5 798 35 806.5 35C814.5 35 815 40.5 809.5 41.5" stroke="#1818a8" stroke-width="1.3" fill="none"/><path d="M805 41.5L809 38.5V44.5Z" fill="#1818a8"/><rect x="808" y="41" width="3" height="1.2" fill="#1818a8"/><rect x="824" y="23" width="1" height="31" fill="#2c2c2c"/><rect x="825" y="23" width="1" height="31" fill="#c4c4c4"/><rect x="826" y="23" width="1" height="31" fill="#2c2c2c"/><path d="M841.5 34.5L844.5 36.5L841.5 38.5M845.5 34.5L848.5 36.5L845.5 38.5" stroke="#000" stroke-width="1.8" fill="none"/><rect x="47.0" y="70.0" width="1.2" height="15" fill="#a80000"/><ellipse cx="47.5" cy="77.5" rx="2.6" ry="3.2" fill="#ffff00" stroke="#00009a" stroke-width="1.4"/><path d="M51.5 77.5L55.0 74.0V81.0Z" fill="#00009a"/><rect x="54.5" y="76.9" width="3.5" height="1.4" fill="#00009a"/><rect x="83.0" y="70.0" width="1.2" height="15" fill="#a80000"/><ellipse cx="83.5" cy="77.5" rx="2.6" ry="3.2" fill="#ffff00" stroke="#00009a" stroke-width="1.4"/><path d="M80 77.5L76.5 74.0V81.0Z" fill="#00009a"/><rect x="73" y="76.9" width="4" height="1.4" fill="#00009a"/><rect x="96" y="62" width="1" height="31" fill="#2c2c2c"/><rect x="97" y="62" width="1" height="31" fill="#c4c4c4"/><rect x="98" y="62" width="1" height="31" fill="#2c2c2c"/><rect x="102.5" y="63.5" width="28" height="28" fill="#000" stroke="#e8892c" stroke-width="1.3"/><rect x="116" y="72" width="1.3" height="11" fill="#a00000"/><path d="M110 77.5L113.5 74V81Z" fill="#00009a"/><rect x="112" y="76.9" width="3" height="1.3" fill="#00009a"/><path d="M123.5 77.5L120 74V81Z" fill="#00009a"/><rect x="118.5" y="76.9" width="3" height="1.3" fill="#00009a"/><rect x="139" y="72" width="1.3" height="11" fill="#a00000"/><ellipse cx="144" cy="77.5" rx="2.5" ry="3.1" fill="#ffff00" stroke="#00009a" stroke-width="1.4"/><path d="M152.5 77.5L149 74V81Z" fill="#00009a"/><rect x="146.5" y="76.9" width="3" height="1.3" fill="#00009a"/><path d="M166 77.5L174 69.5L176.5 70.5L182.5 76.5L175.5 84L170.5 85.5L166.5 81.5Z" fill="#00008a"/><path d="M172.5 76.5L176 73L181 76.5L175 82.5L174 82L174.5 79Z" fill="#949494"/><path d="M170 75.5L174.5 71.5L173.5 75L171 77Z" fill="#555"/><path d="M167.5 80.8L174 71.3" stroke="#f4f4f4" stroke-width="1.1"/><ellipse cx="178" cy="73.7" rx="1.9" ry="3.1" fill="#ffff00" stroke="#00008a" stroke-width="1.5"/><path d="M195 70V80.5L198 78L202.5 77.5Z" fill="#0e8a8a" stroke="#e8e8e8" stroke-width="1"/><path d="M203.5 72.5H208M205.75 70.2V74.8" stroke="#f4f4f4" stroke-width="1.1"/><ellipse cx="203.7" cy="81.8" rx="2.5" ry="3.3" fill="#ffff00" stroke="#00008a" stroke-width="1.3"/><ellipse cx="232.8" cy="79.5" rx="2.8" ry="3.5" fill="#ffff00" stroke="#00008a" stroke-width="1.3"/><path d="M223.5 71.5L235.5 84M235 71L223.5 83.5" stroke="#ff0000" stroke-width="1.8"/><circle cx="224" cy="72" r="0.9" fill="#ff0"/><circle cx="224" cy="83" r="0.9" fill="#ff0"/><rect x="246" y="62" width="1" height="31" fill="#2c2c2c"/><rect x="247" y="62" width="1" height="31" fill="#c4c4c4"/><rect x="248" y="62" width="1" height="31" fill="#2c2c2c"/><rect x="252.5" y="63.5" width="28" height="28" fill="#000" stroke="#e8892c" stroke-width="1.3"/><path d="M262 74V79.5Q262 83.3 266.5 83.3Q271 83.3 271 79.5V74" stroke="#ff0000" stroke-width="3.6" fill="none"/><rect x="260.5" y="69.5" width="3" height="4.6" rx="1.4" fill="#000" stroke="#a8a8a8" stroke-width="1"/><rect x="269.5" y="69.5" width="3" height="4.6" rx="1.4" fill="#000" stroke="#a8a8a8" stroke-width="1"/><rect x="260.3" y="74" width="3.4" height="1" fill="#6a9a00"/><rect x="269.3" y="74" width="3.4" height="1" fill="#6a9a00"/><path d="M263 73.5L270 79.5M270 73.5L263 79.5" stroke="#fff" stroke-width="3.6"/><path d="M263 73.5L270 79.5M270 73.5L263 79.5" stroke="#00e000" stroke-width="2.4"/><path d="M290 74V79.5Q290 83.3 294.5 83.3Q299 83.3 299 79.5V74" stroke="#ff0000" stroke-width="3.6" fill="none"/><rect x="288.5" y="69.5" width="3" height="4.6" rx="1.4" fill="#3a3a3a" stroke="#a8a8a8" stroke-width="1"/><rect x="297.5" y="69.5" width="3" height="4.6" rx="1.4" fill="#3a3a3a" stroke="#a8a8a8" stroke-width="1"/><rect x="288.3" y="74" width="3.4" height="1" fill="#6a9a00"/><rect x="297.3" y="74" width="3.4" height="1" fill="#6a9a00"/><path d="M298 86V83H303V86M300.5 83V86" stroke="#fff" stroke-width="1.1" fill="none"/><path d="M318 74V79.5Q318 83.3 322.5 83.3Q327 83.3 327 79.5V74" stroke="#ff0000" stroke-width="3.6" fill="none"/><rect x="316.5" y="69.5" width="3" height="4.6" rx="1.4" fill="#3a3a3a" stroke="#a8a8a8" stroke-width="1"/><rect x="325.5" y="69.5" width="3" height="4.6" rx="1.4" fill="#3a3a3a" stroke="#a8a8a8" stroke-width="1"/><rect x="316.3" y="74" width="3.4" height="1" fill="#6a9a00"/><rect x="325.3" y="74" width="3.4" height="1" fill="#6a9a00"/><path d="M327.5 87V82.5H331.5M327.5 84.5H330" stroke="#fff" stroke-width="1.1" fill="none"/><path d="M346 74V79.5Q346 83.3 350.5 83.3Q355 83.3 355 79.5V74" stroke="#ff0000" stroke-width="3.6" fill="none"/><rect x="344.5" y="69.5" width="3" height="4.6" rx="1.4" fill="#3a3a3a" stroke="#a8a8a8" stroke-width="1"/><rect x="353.5" y="69.5" width="3" height="4.6" rx="1.4" fill="#3a3a3a" stroke="#a8a8a8" stroke-width="1"/><rect x="344.3" y="74" width="3.4" height="1" fill="#6a9a00"/><rect x="353.3" y="74" width="3.4" height="1" fill="#6a9a00"/><rect x="345" y="70.2" width="2" height="1.3" fill="#fff"/><rect x="354" y="70.2" width="2" height="1.3" fill="#fff"/><path d="M354 82.5H358.5M356.2 82.5V87" stroke="#fff" stroke-width="1.1" fill="none"/><rect x="368" y="62" width="1" height="31" fill="#2c2c2c"/><rect x="369" y="62" width="1" height="31" fill="#c4c4c4"/><rect x="370" y="62" width="1" height="31" fill="#2c2c2c"/><path d="M380 73C381 70 383 70 384.5 71.5S387.5 73 388.5 70" stroke="#e0e0e0" stroke-width="1.4" fill="none"/><circle cx="394" cy="83" r="2.1" fill="#ff0000" stroke="#e8f0f0" stroke-width="1"/><path d="M408 73C409 70 411 70 412.5 71.5S415.5 73 416.5 70" stroke="#e0e0e0" stroke-width="1.4" fill="none"/><circle cx="422" cy="83" r="2.1" fill="#ff0000" stroke="#e8f0f0" stroke-width="1"/><path d="M385.5 75.5L390 80" stroke="#e8e8e8" stroke-width="1.4"/><path d="M391.5 81.5L391 77L387 81Z" fill="#e8e8e8"/><path d="M418.5 80.5L414 76" stroke="#e8e8e8" stroke-width="1.4"/><path d="M412.5 74.5L413 79L417 75Z" fill="#e8e8e8"/><path d="M215.5 119.5C216.5 116 219 112.5 221 112.5M224 112.5C226 112.5 228.5 116 229.5 119.5" stroke="#00a000" stroke-width="1.1" fill="none"/><rect x="215.5" y="109.9" width="14.0" height="1.3" fill="#0000ff"/><rect x="213.9" y="108.9" width="3.2" height="3.2" fill="#0000ff"/><rect x="215.0" y="110.0" width="1" height="1" fill="#fff"/><rect x="220.9" y="108.9" width="3.2" height="3.2" fill="#0000ff"/><rect x="222.0" y="110.0" width="1" height="1" fill="#fff"/><rect x="227.9" y="108.9" width="3.2" height="3.2" fill="#0000ff"/><rect x="229.0" y="110.0" width="1" height="1" fill="#fff"/><rect x="235" y="102" width="1" height="23" fill="#262626"/><rect x="236" y="103" width="1" height="22" fill="#484848"/><rect x="235" y="102" width="2" height="1" fill="#262626"/><rect x="240" y="104" width="8" height="5" fill="#ffffff"/><rect x="241" y="106" width="4.5" height="1" fill="#2a2a2a"/><rect x="244" y="104" width="1" height="1" fill="#2a2a2a"/><rect x="244" y="108" width="1" height="1" fill="#2a2a2a"/><path d="M245 105L246.5 106.5L245 108" stroke="#2a2a2a" stroke-width="1" fill="none"/><path d="M240 118H248M249.5 116.5C250.5 113 251.5 110.5 253.5 110.5H258" stroke="#00a000" stroke-width="1" fill="none"/><rect x="261" y="104" width="8" height="5" fill="#ffffff"/><rect x="262" y="106" width="4.5" height="1" fill="#2a2a2a"/><rect x="265" y="104" width="1" height="1" fill="#2a2a2a"/><rect x="265" y="108" width="1" height="1" fill="#2a2a2a"/><path d="M266 105L267.5 106.5L266 108" stroke="#2a2a2a" stroke-width="1" fill="none"/><path d="M261 119.5H272.5V112M274 110L279 106" stroke="#00a000" stroke-width="1" fill="none"/><rect x="271.7" y="110.2" width="1.6" height="1.6" fill="#fff"/><rect x="282" y="104" width="8" height="5" fill="#ffffff"/><rect x="283" y="106" width="4.5" height="1" fill="#2a2a2a"/><rect x="286" y="104" width="1" height="1" fill="#2a2a2a"/><rect x="286" y="108" width="1" height="1" fill="#2a2a2a"/><path d="M287 105L288.5 106.5L287 108" stroke="#2a2a2a" stroke-width="1" fill="none"/><path d="M285 119.8L295 109.5" stroke="#00a000" stroke-width="1" fill="none"/><rect x="295.7" y="107.4" width="1.6" height="1.6" fill="#fff"/><rect x="304" y="102" width="1" height="23" fill="#262626"/><rect x="305" y="103" width="1" height="22" fill="#484848"/><rect x="304" y="102" width="2" height="1" fill="#262626"/><rect x="319" y="104" width="8" height="5" fill="#ffff00"/><rect x="320" y="106" width="4.5" height="1" fill="#2a2a2a"/><rect x="323" y="104" width="1" height="1" fill="#2a2a2a"/><rect x="323" y="108" width="1" height="1" fill="#2a2a2a"/><path d="M324 105L325.5 106.5L324 108" stroke="#2a2a2a" stroke-width="1" fill="none"/><path d="M309 111.2C312 111 315 113 317.5 116.5M320 117.5H327" stroke="#00a000" stroke-width="1" fill="none"/><rect x="317.7" y="116.60000000000001" width="1.6" height="1.6" fill="#fff"/><rect x="340" y="104" width="8" height="5" fill="#ffff00"/><rect x="341" y="106" width="4.5" height="1" fill="#2a2a2a"/><rect x="344" y="104" width="1" height="1" fill="#2a2a2a"/><rect x="344" y="108" width="1" height="1" fill="#2a2a2a"/><path d="M345 105L346.5 106.5L345 108" stroke="#2a2a2a" stroke-width="1" fill="none"/><path d="M330.5 107.3C333 107.3 335.5 108.5 337 110.3M337.5 112.5V119.5H348" stroke="#00a000" stroke-width="1" fill="none"/><rect x="336.7" y="110.5" width="1.6" height="1.6" fill="#fff"/><rect x="361" y="104" width="8" height="5" fill="#ffff00"/><rect x="362" y="106" width="4.5" height="1" fill="#2a2a2a"/><rect x="365" y="104" width="1" height="1" fill="#2a2a2a"/><rect x="365" y="108" width="1" height="1" fill="#2a2a2a"/><path d="M366 105L367.5 106.5L366 108" stroke="#2a2a2a" stroke-width="1" fill="none"/><path d="M356 109.5L366 119.7" stroke="#00a000" stroke-width="1" fill="none"/><rect x="353.7" y="107.60000000000001" width="1.6" height="1.6" fill="#fff"/><rect x="373" y="102" width="1" height="23" fill="#262626"/><rect x="374" y="103" width="1" height="22" fill="#484848"/><rect x="373" y="102" width="2" height="1" fill="#262626"/><path d="M380 113.5C382 109 383.5 107.5 384.5 108.5C386 110 388 117 390 118.5C391.5 119 393 116 394 112" stroke="#00a000" stroke-width="1.2" fill="none"/><path d="M401 113.5C403 109 404.5 107.5 405.5 108.5C407 110 409 117 411 118.5C412.5 119 414 116 415 112" stroke="#00a000" stroke-width="1.2" fill="none"/><rect x="421" y="102" width="1" height="23" fill="#262626"/><rect x="422" y="103" width="1" height="22" fill="#484848"/><rect x="421" y="102" width="2" height="1" fill="#262626"/><rect x="428" y="110" width="1.2" height="10.5" fill="#a89a10"/><rect x="432" y="110" width="1.2" height="10.5" fill="#a89a10"/><rect x="436" y="110" width="1.2" height="10.5" fill="#a89a10"/><rect x="440" y="110" width="1.2" height="10.5" fill="#a89a10"/><rect x="431.6" y="113.6" width="2" height="1.6" fill="#fff"/><rect x="453" y="106" width="11" height="1.2" fill="#a89a10"/><rect x="453" y="110" width="11" height="1.2" fill="#a89a10"/><rect x="453" y="114" width="11" height="1.2" fill="#a89a10"/><rect x="453" y="118" width="11" height="1.2" fill="#a89a10"/><rect x="458.5" y="109.7" width="2" height="1.8" fill="#fff"/><rect x="469" y="102" width="1" height="23" fill="#262626"/><rect x="470" y="103" width="1" height="22" fill="#484848"/><rect x="469" y="102" width="2" height="1" fill="#262626"/><rect x="473.5" y="102.5" width="22" height="22" fill="#000" stroke="#e8892c" stroke-width="1.3"/><path d="M477.5 119.5C478 117 479 115 480.5 113.5M488 113.5C489.5 115 490.5 117 491.5 119.5" stroke="#00a000" stroke-width="1.1" fill="none"/><rect x="477.5" y="109.9" width="14.0" height="1.3" fill="#0000ff"/><rect x="475.9" y="108.9" width="3.2" height="3.2" fill="#0000ff"/><rect x="477.0" y="110.0" width="1" height="1" fill="#fff"/><rect x="482.9" y="108.9" width="3.2" height="3.2" fill="#0000ff"/><rect x="484.0" y="110.0" width="1" height="1" fill="#fff"/><rect x="489.9" y="108.9" width="3.2" height="3.2" fill="#0000ff"/><rect x="491.0" y="110.0" width="1" height="1" fill="#fff"/><path d="M480.5 106.7V112.5A3.5 3.5 0 0 0 487.5 112.5V106.7" stroke="#ff0000" stroke-width="2" fill="none"/><rect x="498" y="102" width="1" height="23" fill="#262626"/><rect x="499" y="103" width="1" height="22" fill="#484848"/><rect x="498" y="102" width="2" height="1" fill="#262626"/><text x="503.3" y="117" font-family="Liberation Sans" font-size="13.5" fill="#ff0000" stroke="#ff0000" stroke-width="0.7">K</text><text x="523.5" y="117" font-family="Liberation Sans" font-size="13.5" fill="#ff0000" stroke="#ff0000" stroke-width="0.7">T</text><rect x="697" y="111" width="152" height="5" fill="#080808"/><rect x="698" y="112" width="150" height="1" fill="#5a5a5a"/><rect x="698" y="113" width="150" height="1" fill="#4a4a4a"/><rect x="698" y="114" width="150" height="1" fill="#5a5a5a"/><rect x="768.5" y="108.5" width="10" height="10" rx="2.2" fill="#3a3a3a" stroke="#585858" stroke-width="1"/><rect x="839" y="128" width="5" height="427" rx="1" fill="#080808"/><rect x="840" y="129" width="1" height="425" fill="#5a5a5a"/><rect x="841" y="129" width="1" height="425" fill="#444"/><rect x="842" y="129" width="1" height="425" fill="#5a5a5a"/><rect x="836.5" y="336.5" width="10" height="10" rx="2.2" fill="#3a3a3a" stroke="#585858" stroke-width="1"/><rect x="205" y="322" width="2" height="2" fill="#5c5c5c"/><rect x="205" y="325" width="2" height="2" fill="#5c5c5c"/><rect x="205" y="328" width="2" height="2" fill="#5c5c5c"/><rect x="205" y="331" width="2" height="2" fill="#5c5c5c"/><rect x="205" y="334" width="2" height="2" fill="#5c5c5c"/><rect x="205" y="337" width="2" height="2" fill="#5c5c5c"/></svg>
</body></html>
